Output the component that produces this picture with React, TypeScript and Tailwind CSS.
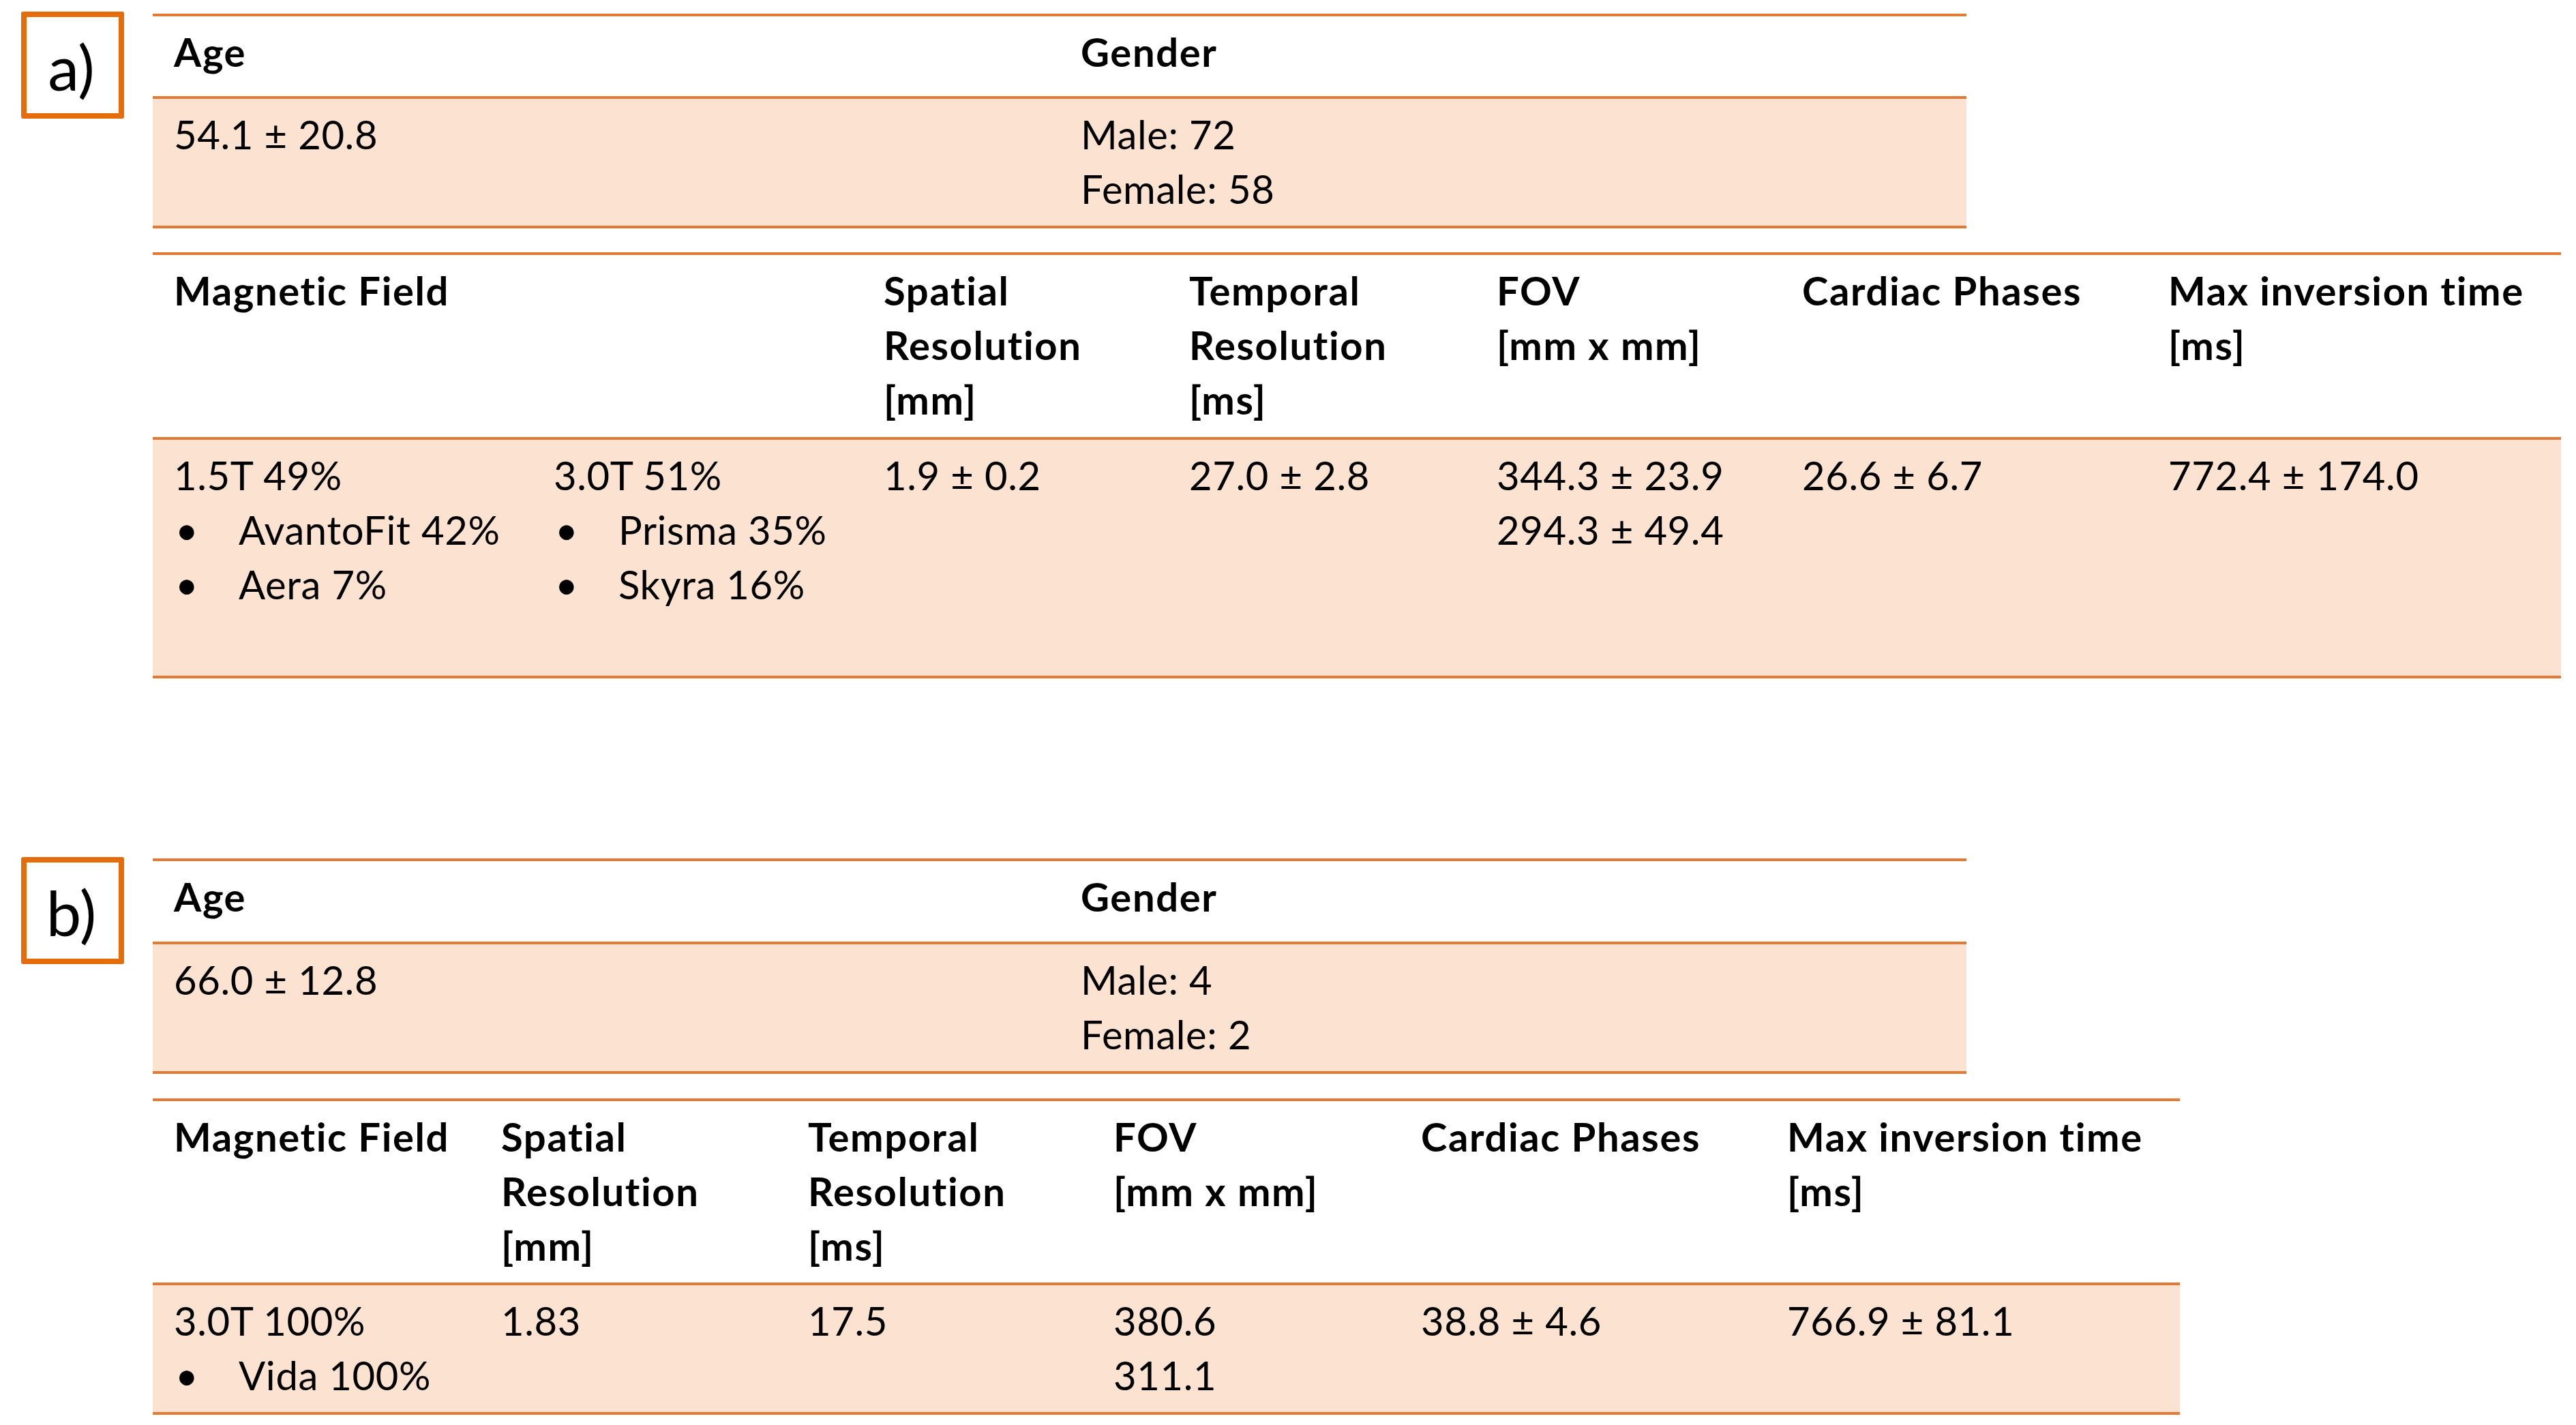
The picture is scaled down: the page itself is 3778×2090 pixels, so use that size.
import React from 'react';

const LINE = 'border-[#e27a35]';

function Bullet({ children }: { children: React.ReactNode }) {
  return (
    <div className="flex">
      <span className="w-[95px] pl-[2px]">•</span>
      <span>{children}</span>
    </div>
  );
}

function Lines({ items }: { items: string[] }) {
  return (
    <>
      {items.map((t) => (
        <div key={t}>{t}</div>
      ))}
    </>
  );
}

function Label({ text }: { text: string }) {
  return (
    <div className="ml-[31px] flex h-[157px] w-[151px] shrink-0 items-center justify-center rounded-[3px] border-[8px] border-[#e46c0a] pt-[4px] pr-[4px] text-[92px] leading-none font-normal tracking-normal">
      {text}
    </div>
  );
}

function Table({
  cols,
  heads,
  bodies,
  width,
  headH,
  bodyH,
}: {
  cols: string;
  heads: { lines: string[]; span?: boolean }[];
  bodies: React.ReactNode[];
  width: string;
  headH: string;
  bodyH: string;
}) {
  return (
    <div className={`${width} border-y-4 ${LINE}`}>
      <div className={`grid ${cols} ${headH} font-bold tracking-[1.6px]`}>
        {heads.map((h, i) => (
          <div key={i} className={`pl-[31px] pt-[12px] ${h.span ? 'col-span-2' : ''}`}>
            <Lines items={h.lines} />
          </div>
        ))}
      </div>
      <div className={`grid ${cols} ${bodyH} border-t-4 ${LINE} bg-[#fbe2d1] tracking-[0.6px]`}>
        {bodies.map((b, i) => (
          <div key={i} className="pl-[31px] pt-[12px]">
            {b}
          </div>
        ))}
      </div>
    </div>
  );
}

export default function App() {
  return (
    <div className="min-h-screen w-full bg-white pt-[17px] font-['Lato',sans-serif] text-[58px] leading-[80px] text-black">
      {/* a) */}
      <section className="flex items-start">
        <Label text="a)" />
        <div className="ml-[42px] flex flex-col">
          <div className="mt-[3px]">
            <Table
              width="w-[2660px]"
              cols="grid-cols-[1330px_1330px]"
              headH="h-[117px]"
              bodyH="h-[190px]"
              heads={[{ lines: ['Age'] }, { lines: ['Gender'] }]}
              bodies={[
                <div>54.1 ± 20.8</div>,
                <Lines items={['Male: 72', 'Female: 58']} />,
              ]}
            />
          </div>
          <div className="mt-[35px]">
            <Table
              width="w-[3532px]"
              cols="grid-cols-[557px_484px_448px_451px_448px_537px_607px]"
              headH="h-[267px]"
              bodyH="h-[350px]"
              heads={[
                { lines: ['Magnetic Field'], span: true },
                { lines: ['Spatial', 'Resolution', '[mm]'] },
                { lines: ['Temporal', 'Resolution', '[ms]'] },
                { lines: ['FOV', '[mm x mm]'] },
                { lines: ['Cardiac Phases'] },
                { lines: ['Max inversion time', '[ms]'] },
              ]}
              bodies={[
                <>
                  <div>1.5T 49%</div>
                  <Bullet>AvantoFit 42%</Bullet>
                  <Bullet>Aera 7%</Bullet>
                </>,
                <>
                  <div>3.0T 51%</div>
                  <Bullet>Prisma 35%</Bullet>
                  <Bullet>Skyra 16%</Bullet>
                </>,
                <div>1.9 ± 0.2</div>,
                <div>27.0 ± 2.8</div>,
                <Lines items={['344.3 ± 23.9', '294.3 ± 49.4']} />,
                <div>26.6 ± 6.7</div>,
                <div>772.4 ± 174.0</div>,
              ]}
            />
          </div>
        </div>
      </section>

      {/* b) */}
      <section className="mt-[262px] flex items-start">
        <Label text="b)" />
        <div className="ml-[42px] flex flex-col">
          <div className="mt-[2px]">
            <Table
              width="w-[2660px]"
              cols="grid-cols-[1330px_1330px]"
              headH="h-[118px]"
              bodyH="h-[190px]"
              heads={[{ lines: ['Age'] }, { lines: ['Gender'] }]}
              bodies={[
                <div>66.0 ± 12.8</div>,
                <Lines items={['Male: 4', 'Female: 2']} />,
              ]}
            />
          </div>
          <div className="mt-[36px]">
            <Table
              width="w-[2973px]"
              cols="grid-cols-[480px_450px_448px_451px_537px_607px]"
              headH="h-[266px]"
              bodyH="h-[190px]"
              heads={[
                { lines: ['Magnetic Field'] },
                { lines: ['Spatial', 'Resolution', '[mm]'] },
                { lines: ['Temporal', 'Resolution', '[ms]'] },
                { lines: ['FOV', '[mm x mm]'] },
                { lines: ['Cardiac Phases'] },
                { lines: ['Max inversion time', '[ms]'] },
              ]}
              bodies={[
                <>
                  <div>3.0T 100%</div>
                  <Bullet>Vida 100%</Bullet>
                </>,
                <div>1.83</div>,
                <div>17.5</div>,
                <Lines items={['380.6', '311.1']} />,
                <div>38.8 ± 4.6</div>,
                <div>766.9 ± 81.1</div>,
              ]}
            />
          </div>
        </div>
      </section>
    </div>
  );
}
